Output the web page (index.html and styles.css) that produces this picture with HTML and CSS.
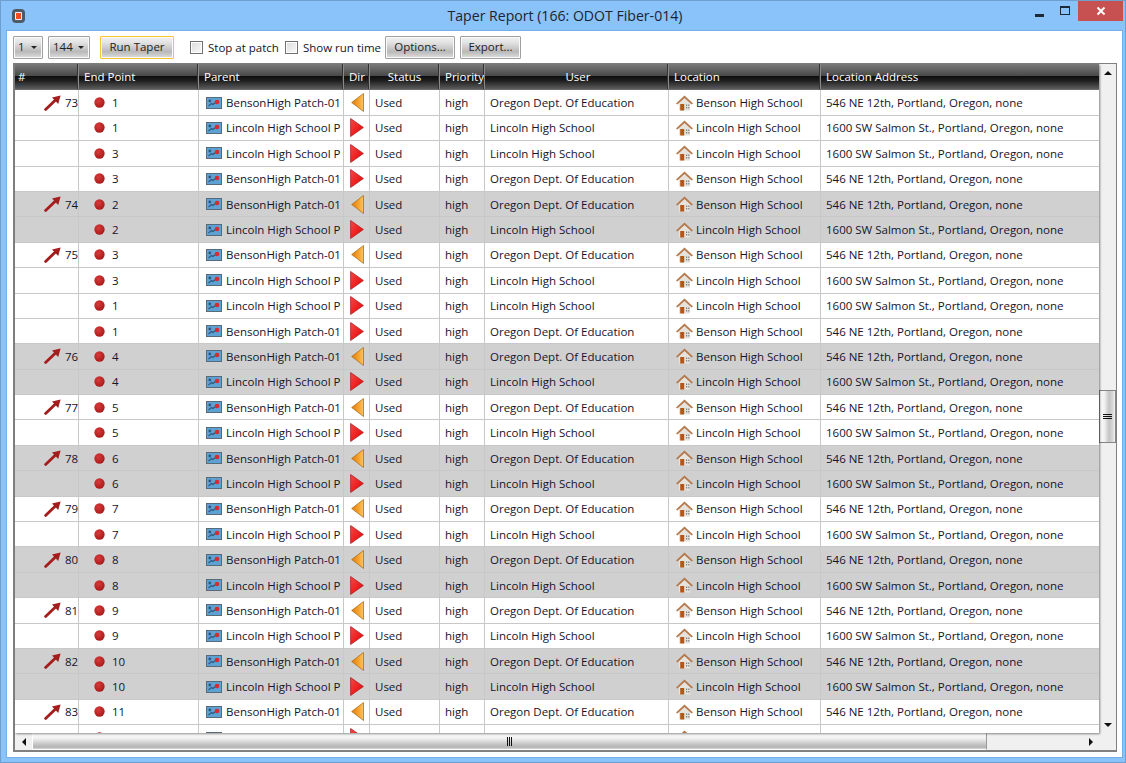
FILE: index.html
```html
<!DOCTYPE html>
<html lang="en">
<head>
    <meta charset="UTF-8">
    <title>Taper Report (166: ODOT Fiber-014)</title>
    <link rel="stylesheet" href="styles.css">
</head>
<body>
    <svg class="defs" width="0" height="0">
        <defs>
            <linearGradient id="orangeFill" x1="0" y1="0" x2="1" y2="0">
                <stop offset="0" stop-color="#e07a10"/>
                <stop offset="0.6" stop-color="#f7a52e"/>
                <stop offset="1" stop-color="#fbc46a"/>
            </linearGradient>
            <linearGradient id="redFill" x1="0" y1="0" x2="1" y2="1">
                <stop offset="0" stop-color="#f04a4a"/>
                <stop offset="0.6" stop-color="#ee1c1c"/>
                <stop offset="1" stop-color="#c01010"/>
            </linearGradient>
            <radialGradient id="dotFill" cx="0.4" cy="0.35" r="0.7">
                <stop offset="0" stop-color="#d83a3a"/>
                <stop offset="1" stop-color="#a81818"/>
            </radialGradient>
            <symbol id="trend" viewBox="0 0 17 16">
                <path d="M1.6 14.4 12 4.4" stroke="#a51c1c" stroke-width="2.8" stroke-linecap="round" fill="none"/>
                <path d="M8 2.6 16.6 0.4 14.2 9Z" fill="#a51c1c"/>
            </symbol>
            <symbol id="dot" viewBox="0 0 12 12">
                <circle cx="6" cy="6" r="5.6" fill="url(#dotFill)"/>
            </symbol>
            <symbol id="patch" viewBox="0 0 16 12">
                <rect x="0.5" y="0.5" width="15" height="11" fill="#5da2d2" stroke="#566a7a"/>
                <path d="M2.5 9 5.5 6.5 7 7.5 10 5" stroke="#2c5a80" stroke-width="1.2" fill="none"/>
                <circle cx="3.8" cy="4" r="1.4" fill="#2c5a80"/>
                <circle cx="11" cy="5" r="2.3" fill="#d92b2b"/>
            </symbol>
            <symbol id="dirLeft" viewBox="0 0 13 19">
                <path d="M12.5 0.5V18.5L0.7 9.5Z" fill="url(#orangeFill)" stroke="#a8701e" stroke-width="0.8"/>
            </symbol>
            <symbol id="dirRight" viewBox="0 0 14 19">
                <path d="M0.6 0.5V18.5L13.4 9.5Z" fill="url(#redFill)" stroke="#b02020" stroke-width="0.8"/>
            </symbol>
            <symbol id="house" viewBox="0 0 17 16">
                <path d="M3 8 8.5 2.8 14 8V15.5H3Z" fill="#e6e2dc"/>
                <path d="M0 8.6 8.5 0.4 17 8.6 15.6 9.6 8.5 3 1.4 9.6Z" fill="#b5784a"/>
                <rect x="4.2" y="9" width="4" height="6.5" fill="#b4561a"/>
                <path d="M10 9.5h1.2v1.5H10zM12.2 9.5h1.2v1.5h-1.2zM10 12h1.2v1.5H10zM12.2 12h1.2v1.5h-1.2z" fill="#808080"/>
            </symbol>
        </defs>
    </svg>

    <div class="window">
        <div class="titlebar">
            <div class="app-icon"><div class="app-icon-core"></div></div>
            <div class="title">Taper Report (166: ODOT Fiber-014)</div>
            <div class="win-controls">
                <div class="win-btn"><div class="min-glyph"></div></div>
                <div class="win-btn"><div class="max-glyph"></div></div>
                <div class="close-btn">
                    <svg width="10" height="10" viewBox="0 0 10 10"><path d="M1.5 1.5 8.5 8.5M8.5 1.5 1.5 8.5" stroke="#fff" stroke-width="2"/></svg>
                </div>
            </div>
        </div>

        <div class="client">
            <div class="toolbar">
                <div class="combo combo-page"><span>1</span><i class="caret"></i></div>
                <div class="combo combo-total"><span>144</span><i class="caret"></i></div>
                <button class="btn btn-run">Run Taper</button>
                <label class="check check-stop"><i class="box"></i>Stop at patch</label>
                <label class="check check-time"><i class="box"></i>Show run time</label>
                <button class="btn btn-options">Options...</button>
                <button class="btn btn-export">Export...</button>
            </div>

            <div class="grid">
                <div class="grid-main">
                    <div class="table">
                        <div class="row head">
                            <div class="cell">#</div>
                            <div class="cell">End Point</div>
                            <div class="cell">Parent</div>
                            <div class="cell">Dir</div>
                            <div class="cell center">Status</div>
                            <div class="cell">Priority</div>
                            <div class="cell center">User</div>
                            <div class="cell">Location</div>
                            <div class="cell">Location Address</div>
                        </div>
                        <div class="rows">
                            <div class="row">
                                <div class="cell num"><svg class="i-trend"><use href="#trend"/></svg><span>73</span></div>
                                <div class="cell ep"><svg class="i-dot"><use href="#dot"/></svg>1</div>
                                <div class="cell par"><svg class="i-patch"><use href="#patch"/></svg>BensonHigh Patch-01</div>
                                <div class="cell dir"><svg class="i-left"><use href="#dirLeft"/></svg></div>
                                <div class="cell">Used</div><div class="cell">high</div><div class="cell">Oregon Dept. Of Education</div>
                                <div class="cell loc"><svg class="i-house"><use href="#house"/></svg>Benson High School</div>
                                <div class="cell">546 NE 12th, Portland, Oregon, none</div>
                            </div>
                            <div class="row">
                                <div class="cell num"></div>
                                <div class="cell ep"><svg class="i-dot"><use href="#dot"/></svg>1</div>
                                <div class="cell par"><svg class="i-patch"><use href="#patch"/></svg>Lincoln High School P</div>
                                <div class="cell dir"><svg class="i-right"><use href="#dirRight"/></svg></div>
                                <div class="cell">Used</div><div class="cell">high</div><div class="cell">Lincoln High School</div>
                                <div class="cell loc"><svg class="i-house"><use href="#house"/></svg>Lincoln High School</div>
                                <div class="cell">1600 SW Salmon St., Portland, Oregon, none</div>
                            </div>
                            <div class="row">
                                <div class="cell num"></div>
                                <div class="cell ep"><svg class="i-dot"><use href="#dot"/></svg>3</div>
                                <div class="cell par"><svg class="i-patch"><use href="#patch"/></svg>Lincoln High School P</div>
                                <div class="cell dir"><svg class="i-right"><use href="#dirRight"/></svg></div>
                                <div class="cell">Used</div><div class="cell">high</div><div class="cell">Lincoln High School</div>
                                <div class="cell loc"><svg class="i-house"><use href="#house"/></svg>Lincoln High School</div>
                                <div class="cell">1600 SW Salmon St., Portland, Oregon, none</div>
                            </div>
                            <div class="row">
                                <div class="cell num"></div>
                                <div class="cell ep"><svg class="i-dot"><use href="#dot"/></svg>3</div>
                                <div class="cell par"><svg class="i-patch"><use href="#patch"/></svg>BensonHigh Patch-01</div>
                                <div class="cell dir"><svg class="i-right"><use href="#dirRight"/></svg></div>
                                <div class="cell">Used</div><div class="cell">high</div><div class="cell">Oregon Dept. Of Education</div>
                                <div class="cell loc"><svg class="i-house"><use href="#house"/></svg>Benson High School</div>
                                <div class="cell">546 NE 12th, Portland, Oregon, none</div>
                            </div>
                            <div class="row alt">
                                <div class="cell num"><svg class="i-trend"><use href="#trend"/></svg><span>74</span></div>
                                <div class="cell ep"><svg class="i-dot"><use href="#dot"/></svg>2</div>
                                <div class="cell par"><svg class="i-patch"><use href="#patch"/></svg>BensonHigh Patch-01</div>
                                <div class="cell dir"><svg class="i-left"><use href="#dirLeft"/></svg></div>
                                <div class="cell">Used</div><div class="cell">high</div><div class="cell">Oregon Dept. Of Education</div>
                                <div class="cell loc"><svg class="i-house"><use href="#house"/></svg>Benson High School</div>
                                <div class="cell">546 NE 12th, Portland, Oregon, none</div>
                            </div>
                            <div class="row alt">
                                <div class="cell num"></div>
                                <div class="cell ep"><svg class="i-dot"><use href="#dot"/></svg>2</div>
                                <div class="cell par"><svg class="i-patch"><use href="#patch"/></svg>Lincoln High School P</div>
                                <div class="cell dir"><svg class="i-right"><use href="#dirRight"/></svg></div>
                                <div class="cell">Used</div><div class="cell">high</div><div class="cell">Lincoln High School</div>
                                <div class="cell loc"><svg class="i-house"><use href="#house"/></svg>Lincoln High School</div>
                                <div class="cell">1600 SW Salmon St., Portland, Oregon, none</div>
                            </div>
                            <div class="row">
                                <div class="cell num"><svg class="i-trend"><use href="#trend"/></svg><span>75</span></div>
                                <div class="cell ep"><svg class="i-dot"><use href="#dot"/></svg>3</div>
                                <div class="cell par"><svg class="i-patch"><use href="#patch"/></svg>BensonHigh Patch-01</div>
                                <div class="cell dir"><svg class="i-left"><use href="#dirLeft"/></svg></div>
                                <div class="cell">Used</div><div class="cell">high</div><div class="cell">Oregon Dept. Of Education</div>
                                <div class="cell loc"><svg class="i-house"><use href="#house"/></svg>Benson High School</div>
                                <div class="cell">546 NE 12th, Portland, Oregon, none</div>
                            </div>
                            <div class="row">
                                <div class="cell num"></div>
                                <div class="cell ep"><svg class="i-dot"><use href="#dot"/></svg>3</div>
                                <div class="cell par"><svg class="i-patch"><use href="#patch"/></svg>Lincoln High School P</div>
                                <div class="cell dir"><svg class="i-right"><use href="#dirRight"/></svg></div>
                                <div class="cell">Used</div><div class="cell">high</div><div class="cell">Lincoln High School</div>
                                <div class="cell loc"><svg class="i-house"><use href="#house"/></svg>Lincoln High School</div>
                                <div class="cell">1600 SW Salmon St., Portland, Oregon, none</div>
                            </div>
                            <div class="row">
                                <div class="cell num"></div>
                                <div class="cell ep"><svg class="i-dot"><use href="#dot"/></svg>1</div>
                                <div class="cell par"><svg class="i-patch"><use href="#patch"/></svg>Lincoln High School P</div>
                                <div class="cell dir"><svg class="i-right"><use href="#dirRight"/></svg></div>
                                <div class="cell">Used</div><div class="cell">high</div><div class="cell">Lincoln High School</div>
                                <div class="cell loc"><svg class="i-house"><use href="#house"/></svg>Lincoln High School</div>
                                <div class="cell">1600 SW Salmon St., Portland, Oregon, none</div>
                            </div>
                            <div class="row">
                                <div class="cell num"></div>
                                <div class="cell ep"><svg class="i-dot"><use href="#dot"/></svg>1</div>
                                <div class="cell par"><svg class="i-patch"><use href="#patch"/></svg>BensonHigh Patch-01</div>
                                <div class="cell dir"><svg class="i-right"><use href="#dirRight"/></svg></div>
                                <div class="cell">Used</div><div class="cell">high</div><div class="cell">Oregon Dept. Of Education</div>
                                <div class="cell loc"><svg class="i-house"><use href="#house"/></svg>Benson High School</div>
                                <div class="cell">546 NE 12th, Portland, Oregon, none</div>
                            </div>
                            <div class="row alt">
                                <div class="cell num"><svg class="i-trend"><use href="#trend"/></svg><span>76</span></div>
                                <div class="cell ep"><svg class="i-dot"><use href="#dot"/></svg>4</div>
                                <div class="cell par"><svg class="i-patch"><use href="#patch"/></svg>BensonHigh Patch-01</div>
                                <div class="cell dir"><svg class="i-left"><use href="#dirLeft"/></svg></div>
                                <div class="cell">Used</div><div class="cell">high</div><div class="cell">Oregon Dept. Of Education</div>
                                <div class="cell loc"><svg class="i-house"><use href="#house"/></svg>Benson High School</div>
                                <div class="cell">546 NE 12th, Portland, Oregon, none</div>
                            </div>
                            <div class="row alt">
                                <div class="cell num"></div>
                                <div class="cell ep"><svg class="i-dot"><use href="#dot"/></svg>4</div>
                                <div class="cell par"><svg class="i-patch"><use href="#patch"/></svg>Lincoln High School P</div>
                                <div class="cell dir"><svg class="i-right"><use href="#dirRight"/></svg></div>
                                <div class="cell">Used</div><div class="cell">high</div><div class="cell">Lincoln High School</div>
                                <div class="cell loc"><svg class="i-house"><use href="#house"/></svg>Lincoln High School</div>
                                <div class="cell">1600 SW Salmon St., Portland, Oregon, none</div>
                            </div>
                            <div class="row">
                                <div class="cell num"><svg class="i-trend"><use href="#trend"/></svg><span>77</span></div>
                                <div class="cell ep"><svg class="i-dot"><use href="#dot"/></svg>5</div>
                                <div class="cell par"><svg class="i-patch"><use href="#patch"/></svg>BensonHigh Patch-01</div>
                                <div class="cell dir"><svg class="i-left"><use href="#dirLeft"/></svg></div>
                                <div class="cell">Used</div><div class="cell">high</div><div class="cell">Oregon Dept. Of Education</div>
                                <div class="cell loc"><svg class="i-house"><use href="#house"/></svg>Benson High School</div>
                                <div class="cell">546 NE 12th, Portland, Oregon, none</div>
                            </div>
                            <div class="row">
                                <div class="cell num"></div>
                                <div class="cell ep"><svg class="i-dot"><use href="#dot"/></svg>5</div>
                                <div class="cell par"><svg class="i-patch"><use href="#patch"/></svg>Lincoln High School P</div>
                                <div class="cell dir"><svg class="i-right"><use href="#dirRight"/></svg></div>
                                <div class="cell">Used</div><div class="cell">high</div><div class="cell">Lincoln High School</div>
                                <div class="cell loc"><svg class="i-house"><use href="#house"/></svg>Lincoln High School</div>
                                <div class="cell">1600 SW Salmon St., Portland, Oregon, none</div>
                            </div>
                            <div class="row alt">
                                <div class="cell num"><svg class="i-trend"><use href="#trend"/></svg><span>78</span></div>
                                <div class="cell ep"><svg class="i-dot"><use href="#dot"/></svg>6</div>
                                <div class="cell par"><svg class="i-patch"><use href="#patch"/></svg>BensonHigh Patch-01</div>
                                <div class="cell dir"><svg class="i-left"><use href="#dirLeft"/></svg></div>
                                <div class="cell">Used</div><div class="cell">high</div><div class="cell">Oregon Dept. Of Education</div>
                                <div class="cell loc"><svg class="i-house"><use href="#house"/></svg>Benson High School</div>
                                <div class="cell">546 NE 12th, Portland, Oregon, none</div>
                            </div>
                            <div class="row alt">
                                <div class="cell num"></div>
                                <div class="cell ep"><svg class="i-dot"><use href="#dot"/></svg>6</div>
                                <div class="cell par"><svg class="i-patch"><use href="#patch"/></svg>Lincoln High School P</div>
                                <div class="cell dir"><svg class="i-right"><use href="#dirRight"/></svg></div>
                                <div class="cell">Used</div><div class="cell">high</div><div class="cell">Lincoln High School</div>
                                <div class="cell loc"><svg class="i-house"><use href="#house"/></svg>Lincoln High School</div>
                                <div class="cell">1600 SW Salmon St., Portland, Oregon, none</div>
                            </div>
                            <div class="row">
                                <div class="cell num"><svg class="i-trend"><use href="#trend"/></svg><span>79</span></div>
                                <div class="cell ep"><svg class="i-dot"><use href="#dot"/></svg>7</div>
                                <div class="cell par"><svg class="i-patch"><use href="#patch"/></svg>BensonHigh Patch-01</div>
                                <div class="cell dir"><svg class="i-left"><use href="#dirLeft"/></svg></div>
                                <div class="cell">Used</div><div class="cell">high</div><div class="cell">Oregon Dept. Of Education</div>
                                <div class="cell loc"><svg class="i-house"><use href="#house"/></svg>Benson High School</div>
                                <div class="cell">546 NE 12th, Portland, Oregon, none</div>
                            </div>
                            <div class="row">
                                <div class="cell num"></div>
                                <div class="cell ep"><svg class="i-dot"><use href="#dot"/></svg>7</div>
                                <div class="cell par"><svg class="i-patch"><use href="#patch"/></svg>Lincoln High School P</div>
                                <div class="cell dir"><svg class="i-right"><use href="#dirRight"/></svg></div>
                                <div class="cell">Used</div><div class="cell">high</div><div class="cell">Lincoln High School</div>
                                <div class="cell loc"><svg class="i-house"><use href="#house"/></svg>Lincoln High School</div>
                                <div class="cell">1600 SW Salmon St., Portland, Oregon, none</div>
                            </div>
                            <div class="row alt">
                                <div class="cell num"><svg class="i-trend"><use href="#trend"/></svg><span>80</span></div>
                                <div class="cell ep"><svg class="i-dot"><use href="#dot"/></svg>8</div>
                                <div class="cell par"><svg class="i-patch"><use href="#patch"/></svg>BensonHigh Patch-01</div>
                                <div class="cell dir"><svg class="i-left"><use href="#dirLeft"/></svg></div>
                                <div class="cell">Used</div><div class="cell">high</div><div class="cell">Oregon Dept. Of Education</div>
                                <div class="cell loc"><svg class="i-house"><use href="#house"/></svg>Benson High School</div>
                                <div class="cell">546 NE 12th, Portland, Oregon, none</div>
                            </div>
                            <div class="row alt">
                                <div class="cell num"></div>
                                <div class="cell ep"><svg class="i-dot"><use href="#dot"/></svg>8</div>
                                <div class="cell par"><svg class="i-patch"><use href="#patch"/></svg>Lincoln High School P</div>
                                <div class="cell dir"><svg class="i-right"><use href="#dirRight"/></svg></div>
                                <div class="cell">Used</div><div class="cell">high</div><div class="cell">Lincoln High School</div>
                                <div class="cell loc"><svg class="i-house"><use href="#house"/></svg>Lincoln High School</div>
                                <div class="cell">1600 SW Salmon St., Portland, Oregon, none</div>
                            </div>
                            <div class="row">
                                <div class="cell num"><svg class="i-trend"><use href="#trend"/></svg><span>81</span></div>
                                <div class="cell ep"><svg class="i-dot"><use href="#dot"/></svg>9</div>
                                <div class="cell par"><svg class="i-patch"><use href="#patch"/></svg>BensonHigh Patch-01</div>
                                <div class="cell dir"><svg class="i-left"><use href="#dirLeft"/></svg></div>
                                <div class="cell">Used</div><div class="cell">high</div><div class="cell">Oregon Dept. Of Education</div>
                                <div class="cell loc"><svg class="i-house"><use href="#house"/></svg>Benson High School</div>
                                <div class="cell">546 NE 12th, Portland, Oregon, none</div>
                            </div>
                            <div class="row">
                                <div class="cell num"></div>
                                <div class="cell ep"><svg class="i-dot"><use href="#dot"/></svg>9</div>
                                <div class="cell par"><svg class="i-patch"><use href="#patch"/></svg>Lincoln High School P</div>
                                <div class="cell dir"><svg class="i-right"><use href="#dirRight"/></svg></div>
                                <div class="cell">Used</div><div class="cell">high</div><div class="cell">Lincoln High School</div>
                                <div class="cell loc"><svg class="i-house"><use href="#house"/></svg>Lincoln High School</div>
                                <div class="cell">1600 SW Salmon St., Portland, Oregon, none</div>
                            </div>
                            <div class="row alt">
                                <div class="cell num"><svg class="i-trend"><use href="#trend"/></svg><span>82</span></div>
                                <div class="cell ep"><svg class="i-dot"><use href="#dot"/></svg>10</div>
                                <div class="cell par"><svg class="i-patch"><use href="#patch"/></svg>BensonHigh Patch-01</div>
                                <div class="cell dir"><svg class="i-left"><use href="#dirLeft"/></svg></div>
                                <div class="cell">Used</div><div class="cell">high</div><div class="cell">Oregon Dept. Of Education</div>
                                <div class="cell loc"><svg class="i-house"><use href="#house"/></svg>Benson High School</div>
                                <div class="cell">546 NE 12th, Portland, Oregon, none</div>
                            </div>
                            <div class="row alt">
                                <div class="cell num"></div>
                                <div class="cell ep"><svg class="i-dot"><use href="#dot"/></svg>10</div>
                                <div class="cell par"><svg class="i-patch"><use href="#patch"/></svg>Lincoln High School P</div>
                                <div class="cell dir"><svg class="i-right"><use href="#dirRight"/></svg></div>
                                <div class="cell">Used</div><div class="cell">high</div><div class="cell">Lincoln High School</div>
                                <div class="cell loc"><svg class="i-house"><use href="#house"/></svg>Lincoln High School</div>
                                <div class="cell">1600 SW Salmon St., Portland, Oregon, none</div>
                            </div>
                            <div class="row">
                                <div class="cell num"><svg class="i-trend"><use href="#trend"/></svg><span>83</span></div>
                                <div class="cell ep"><svg class="i-dot"><use href="#dot"/></svg>11</div>
                                <div class="cell par"><svg class="i-patch"><use href="#patch"/></svg>BensonHigh Patch-01</div>
                                <div class="cell dir"><svg class="i-left"><use href="#dirLeft"/></svg></div>
                                <div class="cell">Used</div><div class="cell">high</div><div class="cell">Oregon Dept. Of Education</div>
                                <div class="cell loc"><svg class="i-house"><use href="#house"/></svg>Benson High School</div>
                                <div class="cell">546 NE 12th, Portland, Oregon, none</div>
                            </div>
                            <div class="row partial">
                                <div class="cell num"></div>
                                <div class="cell ep"><svg class="i-dot"><use href="#dot"/></svg></div>
                                <div class="cell par"><svg class="i-patch"><use href="#patch"/></svg></div>
                                <div class="cell dir"><svg class="i-right"><use href="#dirRight"/></svg></div>
                                <div class="cell"></div><div class="cell"></div><div class="cell"></div>
                                <div class="cell loc"><svg class="i-house"><use href="#house"/></svg></div>
                                <div class="cell"></div>
                            </div>
                        </div>
                    </div>
                    <div class="vscroll">
                        <div class="arrow-box"><i class="tri tri-up"></i></div>
                        <div class="v-space v-before"></div>
                        <div class="v-thumb"><i></i><i></i><i></i></div>
                        <div class="v-space"></div>
                        <div class="arrow-box"><i class="tri tri-down"></i></div>
                    </div>
                </div>
                <div class="hscroll">
                    <div class="h-btn"><i class="tri tri-left"></i></div>
                    <div class="h-thumb"><i></i><i></i><i></i></div>
                    <div class="h-space"></div>
                    <div class="h-btn"><i class="tri tri-right"></i></div>
                </div>
            </div>
        </div>
    </div>
</body>
</html>
```

FILE: styles.css
```css
* {
    margin: 0;
    padding: 0;
    box-sizing: border-box;
}

html, body {
    height: 100%;
    overflow: hidden;
}

body {
    font-family: "Open Sans", "Noto Sans", sans-serif;
    font-size: 11.5px;
    color: #14142a;
}

.defs {
    display: block;
}

.window {
    width: 1126px;
    height: 763px;
    display: flex;
    flex-direction: column;
    background-color: #8ac3f9;
    border: 1px solid #6f9fcf;
}

/* title bar */
.titlebar {
    height: 30px;
    display: flex;
    align-items: flex-start;
    flex-shrink: 0;
}

.app-icon {
    width: 13px;
    height: 14px;
    margin: 8px 0 0 11px;
    padding: 1px;
    background-color: #eef2f6;
    border: 3px solid #4d5a68;
    border-radius: 4px;
    flex-shrink: 0;
}

.app-icon-core {
    height: 100%;
    background-color: #e8521f;
}

.title {
    flex: 1;
    text-align: center;
    font-size: 14.1px;
    line-height: 30px;
    color: #1c2430;
    padding-left: 79px;
}

.win-controls {
    display: flex;
    flex-shrink: 0;
    margin-right: 2px;
}

.win-btn {
    width: 26px;
    height: 20px;
    display: flex;
    align-items: center;
    justify-content: center;
}

.min-glyph {
    width: 9px;
    height: 3px;
    background-color: #1c2a38;
    margin-top: 8px;
}

.max-glyph {
    width: 10px;
    height: 9px;
    border: 1px solid #1c2a38;
    border-top-width: 2px;
    margin-top: -2px;
}

.close-btn {
    width: 45px;
    height: 20px;
    background-color: #c75050;
    display: flex;
    align-items: center;
    justify-content: center;
}

/* client area */
.client {
    flex: 1;
    min-height: 0;
    margin: 0 3px 5px 6px;
    padding: 5px 5px 5px 6px;
    background-color: #fff;
    display: flex;
    flex-direction: column;
    gap: 4px;
    box-shadow: 0 0 0 1px #76aee6;
}

.toolbar {
    height: 23px;
    display: flex;
    align-items: center;
    flex-shrink: 0;
}

.combo, .btn {
    height: 23px;
    border: 1px solid #a0a0a0;
    border-radius: 1px;
    background: linear-gradient(#f2f2f2 0, #e4e4e4 25%, #b9b9b9 70%, #dedede 100%);
    box-shadow: inset 0 0 0 1px #fafafa;
    font-family: inherit;
    font-size: 11.5px;
    color: #222;
}

.btn {
    padding-bottom: 2px;
}

.combo {
    display: flex;
    align-items: center;
    justify-content: space-between;
    padding: 0 5px 2px 4px;
}

.combo-page {
    width: 30px;
}

.combo-total {
    width: 42px;
    margin-left: 5px;
}

.caret {
    width: 0;
    height: 0;
    margin-top: 2px;
    border-left: 3px solid transparent;
    border-right: 3px solid transparent;
    border-top: 3px solid #222;
}

.btn-run {
    width: 74px;
    margin-left: 10px;
    border: 1px solid #f7c52e;
}

.check {
    display: flex;
    align-items: center;
}

.check-stop {
    margin-left: 16px;
}

.check-time {
    margin-left: 6px;
}

.box {
    width: 13px;
    height: 13px;
    margin-right: 5px;
    background: linear-gradient(135deg, #dcdcdc, #fafafa);
    border: 1px solid #707070;
    box-shadow: inset 0 0 0 1px #fff;
}

.btn-options {
    width: 70px;
    margin-left: 4px;
}

.btn-export {
    width: 61px;
    margin-left: 5px;
}

/* grid */
.grid {
    height: 689px;
    display: flex;
    flex-direction: column;
    background-color: #f0f0f0;
    border: 1px solid #808080;
    border-left-width: 2px;
    border-bottom-width: 2px;
}

.grid-main {
    flex: 1;
    min-height: 0;
    display: flex;
}

.table {
    width: 1084px;
    display: flex;
    flex-direction: column;
    background-color: #fff;
    box-shadow: 1px 1px 2px rgba(0, 0, 0, 0.45);
    position: relative;
}

.rows {
    flex: 1;
    min-height: 0;
    overflow: hidden;
}

.row {
    display: grid;
    grid-template-columns: 64px 120px 145px 26px 70px 45px 184px 152px 278px;
    height: 25.4px;
    border-bottom: 1px solid #c8c8c8;
    flex-shrink: 0;
}

.row.alt {
    background-color: #d0d0d0;
}

.row.partial {
    border-bottom: 0;
}

.cell {
    display: flex;
    align-items: center;
    padding-left: 5px;
    border-right: 1px solid #c8c8c8;
    white-space: nowrap;
    overflow: hidden;
}

.cell:last-child {
    border-right: 0;
}

.row.head {
    height: 26.4px;
    border-bottom: 1px solid #6a6a6a;
    color: #fff;
    background: linear-gradient(#7a7a7a 0, #4a4a4a 46%, #101010 50%, #1c1c1c 65%, #5c5c5c 100%);
}

.head .cell {
    border-right: 1px solid #8a8a8a;
    box-shadow: inset -1px 0 0 #333;
    padding-left: 5px;
}

.head .cell:first-child {
    padding-left: 3px;
}

.head .cell:last-child {
    border-right: 0;
    box-shadow: none;
}

.head .center {
    justify-content: center;
    padding-left: 0;
}

.head .cell:nth-child(7) {
    padding-left: 3px;
}

.num {
    padding-left: 29px;
    gap: 4px;
}

.ep {
    padding-left: 15px;
    gap: 7px;
}

.par {
    padding-left: 7px;
    gap: 4px;
}

.dir {
    padding-left: 6px;
}

.loc {
    padding-left: 7px;
    gap: 3px;
}

.i-trend {
    width: 17px;
    height: 16px;
    flex-shrink: 0;
}

.i-dot {
    width: 11px;
    height: 11px;
    flex-shrink: 0;
}

.i-patch {
    width: 16px;
    height: 12px;
    flex-shrink: 0;
}

.i-left {
    width: 13px;
    height: 19px;
    margin-left: 1px;
}

.i-right {
    width: 14px;
    height: 19px;
}

.i-house {
    width: 17px;
    height: 16px;
    flex-shrink: 0;
}

/* scrollbars */
.tri {
    width: 0;
    height: 0;
    display: block;
}

.tri-up {
    border-left: 4px solid transparent;
    border-right: 4px solid transparent;
    border-bottom: 4px solid #111;
}

.tri-down {
    border-left: 4px solid transparent;
    border-right: 4px solid transparent;
    border-top: 4px solid #111;
}

.tri-left {
    border-top: 4px solid transparent;
    border-bottom: 4px solid transparent;
    border-right: 4px solid #111;
}

.tri-right {
    border-top: 4px solid transparent;
    border-bottom: 4px solid transparent;
    border-left: 4px solid #111;
}

.vscroll {
    flex: 1;
    display: flex;
    flex-direction: column;
}

.arrow-box {
    height: 17px;
    display: flex;
    align-items: center;
    justify-content: center;
}

.v-space {
    flex: 1;
}

.v-before {
    flex: 0 0 309px;
}

.v-thumb {
    height: 53px;
    display: flex;
    flex-direction: column;
    align-items: center;
    justify-content: center;
    gap: 1px;
    background: linear-gradient(90deg, #fafafa 0, #f0f0f0 30%, #c4c4c4 60%, #d8d8d8 85%, #f4f4f4 100%);
    border: 1px solid #858585;
}

.v-thumb i {
    width: 9px;
    height: 1px;
    background-color: #111;
}

.hscroll {
    height: 17px;
    display: flex;
    align-items: center;
    flex-shrink: 0;
    margin-right: 17px;
}

.h-btn {
    width: 17px;
    height: 17px;
    display: flex;
    align-items: center;
    justify-content: center;
}

.h-thumb {
    width: 955px;
    height: 17px;
    display: flex;
    align-items: center;
    justify-content: center;
    gap: 1px;
    background: linear-gradient(#fafafa 0, #f0f0f0 30%, #c4c4c4 70%, #b4b4b4 88%, #d8d8d8 100%);
    border: 1px solid #fff;
    border-right: 1px solid #9a9a9a;
}

.h-thumb i {
    width: 1px;
    height: 9px;
    background-color: #111;
}

.h-space {
    flex: 1;
}
```
